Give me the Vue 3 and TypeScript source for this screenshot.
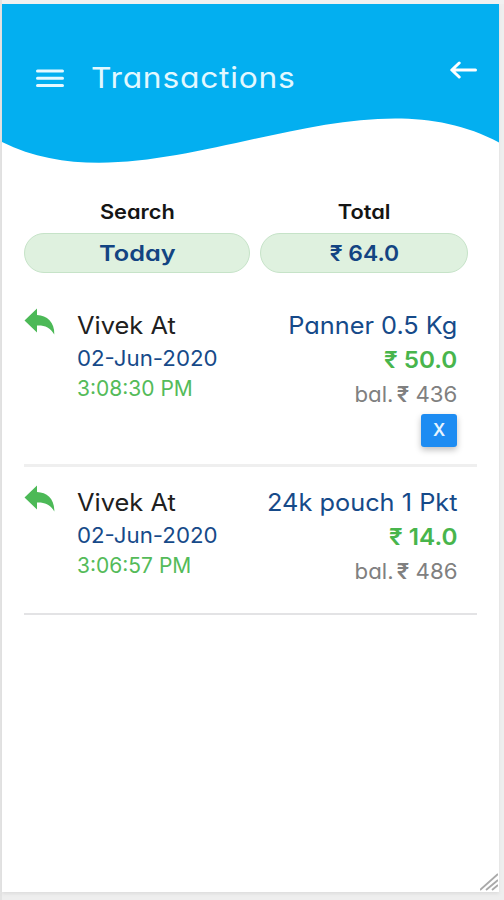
<script setup lang="ts">
interface Transaction {
  name: string
  date: string
  time: string
  item: string
  amount: string
  balance: string
  cancellable: boolean
}

const transactions: Transaction[] = [
  { name: 'Vivek At', date: '02-Jun-2020', time: '3:08:30 PM', item: 'Panner 0.5 Kg', amount: '50.0', balance: '436', cancellable: true },
  { name: 'Vivek At', date: '02-Jun-2020', time: '3:06:57 PM', item: '24k pouch 1 Pkt', amount: '14.0', balance: '486', cancellable: false },
]
</script>

<template>
  <div class="page">
    <main class="screen">
      <header class="header">
        <svg class="wave" viewBox="0 0 497 160" preserveAspectRatio="none" aria-hidden="true">
          <path d="M0 0H497V138.5C348 58 149 212 0 138Z" fill="#03aff0" />
        </svg>
        <div class="bar">
          <svg class="menu" width="28" height="20" viewBox="0 0 28 20" fill="none" stroke="#e6f9ff" stroke-width="3" stroke-linecap="round">
            <path d="M1.5 3H26.5M1.5 10.3H26.5M1.5 17.5H26.5" />
          </svg>
          <h1 class="title">Transactions</h1>
          <svg class="back" width="28" height="18" viewBox="0 0 28 18" fill="none" stroke="#fff" stroke-width="3" stroke-linecap="round" stroke-linejoin="round">
            <path d="M9.2 2L1.8 9L9.2 16M2.5 9H25.5" />
          </svg>
        </div>
      </header>

      <section class="filters">
        <div class="filter">
          <span class="label">Search</span>
          <div class="pill"><span class="value wide">Today</span></div>
        </div>
        <div class="filter">
          <span class="label">Total</span>
          <div class="pill"><span class="value">₹ 64.0</span></div>
        </div>
      </section>

      <ul class="list">
        <li v-for="t in transactions" :key="t.time" class="row" :class="{ open: t.cancellable }">
          <svg class="reply" width="31" height="27" viewBox="0 0 31 27" aria-hidden="true">
            <path d="M.5 12.4L13 .5V7C23 7.4 30.7 14 30.3 26.4C26 19.4 21 17.2 13 17.5V24.4Z" fill="#4cb957" />
          </svg>
          <div class="who">
            <div class="name">{{ t.name }}</div>
            <div class="date">{{ t.date }}</div>
            <div class="time">{{ t.time }}</div>
          </div>
          <div class="what">
            <div class="item">{{ t.item }}</div>
            <div class="amount">₹ {{ t.amount }}</div>
            <div class="balance">bal.<b>₹</b> {{ t.balance }}</div>
            <button v-if="t.cancellable" class="cancel">X</button>
          </div>
        </li>
      </ul>

      <svg class="grip" width="18" height="18" viewBox="0 0 18 18" stroke="#aaa" stroke-width="1.8">
        <path d="M0 17L18 1M6 17L18 7M12 17L18 12" />
      </svg>
    </main>
  </div>
</template>

<style>
body {
  margin: 0;
}
</style>

<style scoped>
.page {
  box-sizing: border-box;
  width: 504px;
  height: 900px;
  padding: 4px 5px 8px 2px;
  background: #eeeeee;
  font-family: Inter, "Open Sans", sans-serif;
  font-feature-settings: "cv11" 1;
  box-shadow: inset 2px 0 #e3e3e3, inset 0 4px #f1f1f1;
}
.screen {
  position: relative;
  height: 888px;
  background: #fff;
  box-shadow: 0 2px 3px #dedede;
}
.header {
  position: relative;
  height: 160px;
}
.wave {
  position: absolute;
  inset: 0;
  width: 100%;
  height: 160px;
}
.bar {
  position: relative;
  display: flex;
  align-items: flex-start;
  padding: 0 21px 0 34px;
}
.menu {
  margin-top: 64px;
}
.title {
  flex: 1;
  margin: 54px 0 0 27px;
  font-size: 29px;
  font-weight: 400;
  line-height: 40px;
  letter-spacing: 0.7px;
  color: #e2f8ff;
  transform: scaleX(1.095);
  transform-origin: left;
}
.back {
  margin-top: 57px;
}
.filters {
  display: grid;
  grid-template-columns: 226px 208px;
  gap: 10px;
  padding: 32px 0 0 22px;
}
.filter {
  display: flex;
  flex-direction: column;
  align-items: center;
}
.label {
  height: 36px;
  padding-top: 1px;
  font-size: 20px;
  line-height: 30px;
  font-weight: 600;
  color: #151515;
  transform: scaleX(1.09);
}
.pill {
  box-sizing: border-box;
  width: 100%;
  height: 40px;
  border: 1.5px solid #c6e3c8;
  border-radius: 20px;
  background: #dff1df;
  text-align: center;
  font-size: 22px;
  line-height: 38px;
  font-weight: 600;
  color: #134482;
}
.value {
  display: inline-block;
  transform: scaleX(1.04);
}
.value.wide {
  transform: scaleX(1.15);
}
.list {
  margin: 34px 22px 0;
  padding: 0;
  list-style: none;
}
.row {
  box-sizing: border-box;
  display: grid;
  grid-template-columns: 53px 1fr auto;
  height: 131px;
  padding-right: 20px;
  border-bottom: 2px solid #e3e3e5;
}
.row.open {
  height: 160px;
  margin-bottom: 17px;
  border-bottom: 3px solid #efefef;
}
.reply {
  margin-top: 1px;
}
.who,
.what {
  padding-top: 1px;
}
.name,
.item {
  font-size: 24px;
  line-height: 36px;
  color: #202020;
}
.name,
.date {
  transform: scaleX(1.06);
  transform-origin: left;
}
.item {
  color: #164a89;
}
.item,
.amount {
  transform: scaleX(1.055);
  transform-origin: right;
}
.date,
.time {
  font-size: 21px;
  line-height: 30px;
  color: #164a89;
}
.time {
  color: #54bb59;
}
.what {
  text-align: right;
}
.amount {
  font-size: 23px;
  line-height: 33px;
  font-weight: 600;
  color: #48b54c;
}
.balance {
  font-size: 21px;
  line-height: 36px;
  color: #808080;
  transform: scaleX(1.06);
  transform-origin: right;
}
.balance b {
  margin-left: 3px;
  font-weight: 600;
}
.cancel {
  display: block;
  width: 36px;
  height: 33px;
  margin: 1px 0 0 auto;
  padding: 0;
  border: 0;
  border-radius: 3px;
  background: #1d8cf2;
  box-shadow: 0 3px 6px rgba(0, 0, 0, 0.25);
  color: #e8f5ff;
  font-family: inherit;
  font-size: 17px;
  font-weight: 600;
  line-height: 33px;
}
.grip {
  position: absolute;
  right: 1px;
  bottom: 1px;
}
</style>
